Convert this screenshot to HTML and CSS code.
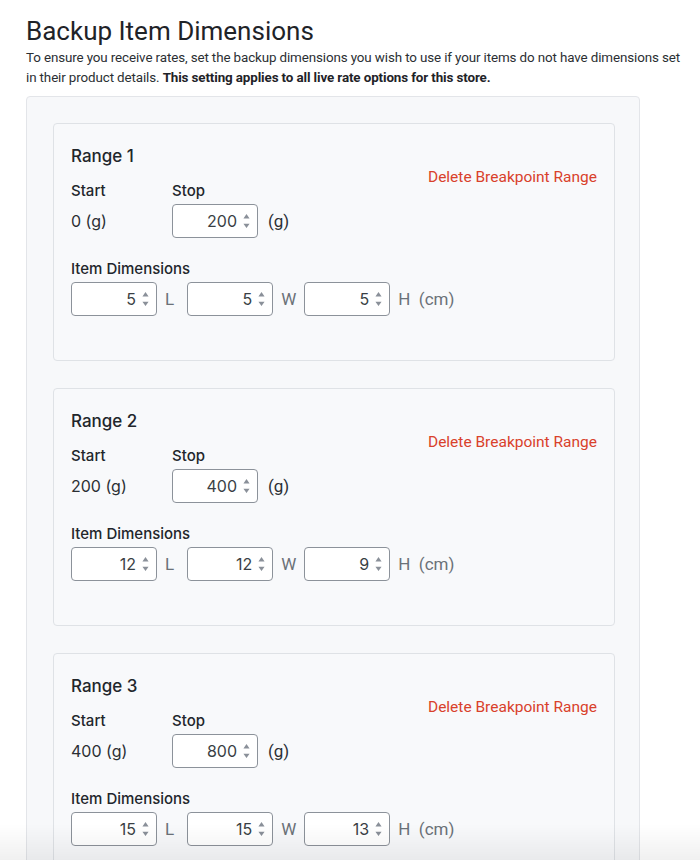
FILE: index.html
```html
<!DOCTYPE html>
<html lang="en">
<head>
    <meta charset="UTF-8">
    <meta name="viewport" content="width=device-width, initial-scale=1.0">
    <title>Backup Item Dimensions</title>
    <link rel="stylesheet" href="styles.css">
</head>
<body>
    <div class="page">
        <h1>Backup Item Dimensions</h1>
        <p class="intro">
            To ensure you receive rates, set the backup dimensions you wish to use if your items do not have dimensions set
            in their product details. <strong>This setting applies to all live rate options for this store.</strong>
        </p>

        <div class="ranges-panel">

            <div class="range-card">
                <div class="range-main">
                    <h2 class="range-title">Range 1</h2>
                    <div class="weight-row">
                        <div class="weight-col start-col">
                            <div class="field-label">Start</div>
                            <div class="weight-value">0 (g)</div>
                        </div>
                        <div class="weight-col">
                            <div class="field-label">Stop</div>
                            <div class="input-line">
                                <div class="num-box"><input type="text" value="200"><svg class="spin" viewBox="0 0 8 16"><path d="M4 0 L7.5 5 H0.5 Z M4 16 L7.5 11 H0.5 Z"/></svg></div>
                                <span class="unit">(g)</span>
                            </div>
                        </div>
                    </div>
                    <div class="field-label dims-label">Item Dimensions</div>
                    <div class="dims-row">
                        <div class="num-box"><input type="text" value="5"><svg class="spin" viewBox="0 0 8 16"><path d="M4 0 L7.5 5 H0.5 Z M4 16 L7.5 11 H0.5 Z"/></svg></div>
                        <span class="dim-unit dim-l">L</span>
                        <div class="num-box"><input type="text" value="5"><svg class="spin" viewBox="0 0 8 16"><path d="M4 0 L7.5 5 H0.5 Z M4 16 L7.5 11 H0.5 Z"/></svg></div>
                        <span class="dim-unit">W</span>
                        <div class="num-box"><input type="text" value="5"><svg class="spin" viewBox="0 0 8 16"><path d="M4 0 L7.5 5 H0.5 Z M4 16 L7.5 11 H0.5 Z"/></svg></div>
                        <span class="dim-unit">H&nbsp;&nbsp;(cm)</span>
                    </div>
                </div>
                <a class="delete-link" href="#">Delete Breakpoint Range</a>
            </div>

            <div class="range-card">
                <div class="range-main">
                    <h2 class="range-title">Range 2</h2>
                    <div class="weight-row">
                        <div class="weight-col start-col">
                            <div class="field-label">Start</div>
                            <div class="weight-value">200 (g)</div>
                        </div>
                        <div class="weight-col">
                            <div class="field-label">Stop</div>
                            <div class="input-line">
                                <div class="num-box"><input type="text" value="400"><svg class="spin" viewBox="0 0 8 16"><path d="M4 0 L7.5 5 H0.5 Z M4 16 L7.5 11 H0.5 Z"/></svg></div>
                                <span class="unit">(g)</span>
                            </div>
                        </div>
                    </div>
                    <div class="field-label dims-label">Item Dimensions</div>
                    <div class="dims-row">
                        <div class="num-box"><input type="text" value="12"><svg class="spin" viewBox="0 0 8 16"><path d="M4 0 L7.5 5 H0.5 Z M4 16 L7.5 11 H0.5 Z"/></svg></div>
                        <span class="dim-unit dim-l">L</span>
                        <div class="num-box"><input type="text" value="12"><svg class="spin" viewBox="0 0 8 16"><path d="M4 0 L7.5 5 H0.5 Z M4 16 L7.5 11 H0.5 Z"/></svg></div>
                        <span class="dim-unit">W</span>
                        <div class="num-box"><input type="text" value="9"><svg class="spin" viewBox="0 0 8 16"><path d="M4 0 L7.5 5 H0.5 Z M4 16 L7.5 11 H0.5 Z"/></svg></div>
                        <span class="dim-unit">H&nbsp;&nbsp;(cm)</span>
                    </div>
                </div>
                <a class="delete-link" href="#">Delete Breakpoint Range</a>
            </div>

            <div class="range-card">
                <div class="range-main">
                    <h2 class="range-title">Range 3</h2>
                    <div class="weight-row">
                        <div class="weight-col start-col">
                            <div class="field-label">Start</div>
                            <div class="weight-value">400 (g)</div>
                        </div>
                        <div class="weight-col">
                            <div class="field-label">Stop</div>
                            <div class="input-line">
                                <div class="num-box"><input type="text" value="800"><svg class="spin" viewBox="0 0 8 16"><path d="M4 0 L7.5 5 H0.5 Z M4 16 L7.5 11 H0.5 Z"/></svg></div>
                                <span class="unit">(g)</span>
                            </div>
                        </div>
                    </div>
                    <div class="field-label dims-label">Item Dimensions</div>
                    <div class="dims-row">
                        <div class="num-box"><input type="text" value="15"><svg class="spin" viewBox="0 0 8 16"><path d="M4 0 L7.5 5 H0.5 Z M4 16 L7.5 11 H0.5 Z"/></svg></div>
                        <span class="dim-unit dim-l">L</span>
                        <div class="num-box"><input type="text" value="15"><svg class="spin" viewBox="0 0 8 16"><path d="M4 0 L7.5 5 H0.5 Z M4 16 L7.5 11 H0.5 Z"/></svg></div>
                        <span class="dim-unit">W</span>
                        <div class="num-box"><input type="text" value="13"><svg class="spin" viewBox="0 0 8 16"><path d="M4 0 L7.5 5 H0.5 Z M4 16 L7.5 11 H0.5 Z"/></svg></div>
                        <span class="dim-unit">H&nbsp;&nbsp;(cm)</span>
                    </div>
                </div>
                <a class="delete-link" href="#">Delete Breakpoint Range</a>
            </div>

        </div>
    </div>
    <div class="bottom-fade"></div>
</body>
</html>
```

FILE: styles.css
```css
body {
    margin: 0;
    padding: 0;
    font-family: Roboto, "Liberation Sans", sans-serif;
    background: white;
    color: #212529;
}

.page {
    padding: 14px 6px 0 26px;
}

h1 {
    font-size: 26px;
    font-weight: 400;
    margin: 0;
    line-height: 34px;
    color: #1f2328;
}

.intro {
    max-width: 660px;
    font-size: 13.4px;
    line-height: 20px;
    letter-spacing: -0.12px;
    margin: 0 0 8px 0;
    color: #2b2f33;
}

.intro strong {
    font-weight: 700;
    color: #1f2328;
}

.ranges-panel {
    width: 614px;
    box-sizing: border-box;
    background: #f7f8fa;
    border: 1px solid #e3e5e9;
    border-radius: 4px;
    padding: 26px 24px 27px 26px;
    display: flex;
    flex-direction: column;
    gap: 27px;
}

.range-card {
    display: flex;
    justify-content: space-between;
    align-items: flex-start;
    background: #f8f9fb;
    border: 1px solid #dfe2e6;
    border-radius: 4px;
    padding: 20px 17px 44px 17px;
}

.range-main {
    flex: 1;
    min-width: 0;
    font-family: Inter, Roboto, sans-serif;
}

.range-title {
    font-size: 17px;
    font-weight: 500;
    line-height: 24px;
    margin: 0 0 13px 0;
    color: #22262b;
}

.weight-row {
    display: flex;
}

.weight-col.start-col {
    width: 101px;
}

.field-label {
    font-size: 15px;
    font-weight: 500;
    line-height: 20px;
    color: #22262b;
    margin-bottom: 3px;
}

.weight-value {
    font-size: 16px;
    line-height: 34px;
    color: #2b2f33;
}

.input-line {
    display: flex;
    align-items: center;
    gap: 10px;
}

.unit {
    font-family: Roboto, sans-serif;
    font-size: 17px;
    color: #2b2f33;
}

.dims-label {
    margin-top: 21px;
}

.dims-row {
    display: flex;
    align-items: center;
}

.num-box {
    flex: none;
    display: flex;
    align-items: center;
    width: 86px;
    height: 34px;
    box-sizing: border-box;
    border: 1px solid #8c929a;
    border-radius: 4px;
    background: white;
    padding: 0 7px 0 6px;
    gap: 6px;
}

.num-box input {
    border: none;
    outline: none;
    background: transparent;
    width: 100%;
    min-width: 0;
    padding: 0;
    text-align: right;
    font-family: Inter, Roboto, sans-serif;
    font-size: 16px;
    color: #3a3f45;
}

.spin {
    width: 7px;
    height: 16px;
    flex: none;
    fill: #8a9099;
}

.dim-unit {
    font-family: Roboto, sans-serif;
    font-size: 17px;
    color: #6b7178;
    white-space: nowrap;
    margin: 0 8px 0 8px;
}

.dim-unit.dim-l {
    margin-right: 13px;
}

.delete-link {
    flex: none;
    font-size: 15.5px;
    color: #d9412b;
    text-decoration: none;
    white-space: nowrap;
    margin-top: 24px;
}

.bottom-fade {
    position: fixed;
    left: 0;
    right: 0;
    bottom: 0;
    height: 36px;
    background: linear-gradient(to bottom, rgba(0, 0, 0, 0), rgba(0, 0, 0, 0.06));
    pointer-events: none;
}
```
